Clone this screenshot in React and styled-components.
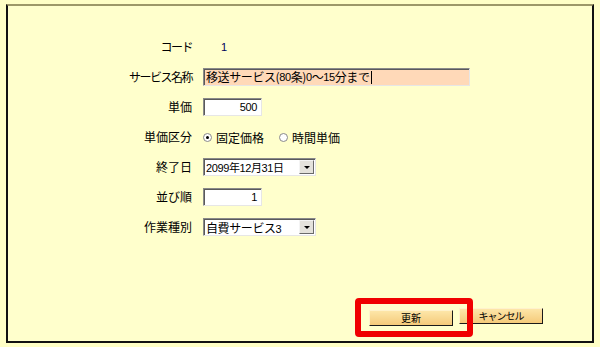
import React from "react";
import styled, { createGlobalStyle } from "styled-components";

const Global = createGlobalStyle`
  html, body { margin: 0; padding: 0; background: #ffffc6; }
  body { font-family: "Noto Sans CJK JP", "Noto Sans", sans-serif; font-size: 12px; color: #000; }
`;

const Page = styled.div`
  width: 600px;
  height: 347px;
  padding: 4px 6px 0 6px;
  box-sizing: border-box;
  background: #ffffc6;
`;

const Frame = styled.div`
  width: 588px;
  height: 339px;
  box-sizing: border-box;
  border: 2px solid #111;
  border-top-color: #9d9868;
  background: #ffffcc;
  padding-top: 26px;
  display: flex;
  flex-direction: column;
`;

const Form = styled.div`
  display: grid;
  grid-template-columns: 184px 1fr;
  column-gap: 11px;
  grid-auto-rows: 30px;
  align-items: center;
`;

const Label = styled.div`
  text-align: right;
  font-size: 12px;
  line-height: 14px;
  letter-spacing: ${(p) => (p.$tight ? "-1.5px" : "0")};
`;

const Field = styled.div`
  display: flex;
  align-items: center;
`;

const CodeValue = styled.span`
  padding-left: 18px;
  color: #00005a;
  font-family: "Liberation Sans", sans-serif;
  font-size: 11px;
`;

const TextBox = styled.div`
  box-sizing: border-box;
  width: ${(p) => p.$w}px;
  height: 18px;
  background: ${(p) => p.$bg || "#fff"};
  border: 1px solid;
  border-color: #8a8a8a #e6e6e6 #e6e6e6 #8a8a8a;
  box-shadow: inset 1px 1px 0 #5a5a5a;
  display: flex;
  align-items: center;
  justify-content: ${(p) => (p.$right ? "flex-end" : "flex-start")};
  padding: 0 4px 0 2px;
  font-size: 12px;
  line-height: 14px;
  letter-spacing: -0.4px;
  white-space: nowrap;
  overflow: hidden;
`;

const Num = styled.span`
  font-family: "Liberation Sans", sans-serif;
  font-size: 11px;
`;

const Caret = styled.span`
  display: inline-block;
  width: 1px;
  height: 13px;
  background: #000;
  margin-left: 1px;
`;

const SelectBox = styled.div`
  box-sizing: border-box;
  width: 113px;
  height: 18px;
  background: #fff;
  border: 1px solid;
  border-color: #8a8a8a #e6e6e6 #e6e6e6 #8a8a8a;
  box-shadow: inset 1px 1px 0 #5a5a5a;
  display: flex;
  align-items: center;
  padding-left: 2px;
  font-size: 12px;
  letter-spacing: -0.4px;
  white-space: nowrap;
`;

const SelectText = styled.span`
  flex: 1;
  font-size: ${(p) => p.$size || 12}px;
`;

const ArrowBtn = styled.span`
  box-sizing: border-box;
  width: 15px;
  height: 14px;
  margin-right: 1px;
  background: #e4e2dc;
  border: 1px solid;
  border-color: #f4f4f4 #6a6a6a #6a6a6a #f4f4f4;
  display: flex;
  align-items: center;
  justify-content: center;
  &::after {
    content: "";
    border-left: 3px solid transparent;
    border-right: 3px solid transparent;
    border-top: 3px solid #000;
  }
`;

const RadioGroup = styled.div`
  display: flex;
  align-items: center;
`;

const RadioItem = styled.label`
  display: flex;
  align-items: center;
  margin-right: ${(p) => p.$mr || 0}px;
  font-size: 12px;
`;

const RadioDot = styled.span`
  box-sizing: border-box;
  width: 9px;
  height: 9px;
  border-radius: 50%;
  border: 1px solid #8a8a8a;
  background: #fff;
  margin: 0 4px 0 0;
  display: flex;
  align-items: center;
  justify-content: center;
  &::after {
    content: "";
    width: 3px;
    height: 3px;
    border-radius: 50%;
    background: ${(p) => (p.$checked ? "#000" : "transparent")};
  }
`;

const Footer = styled.div`
  margin-top: 66px;
  display: flex;
  justify-content: flex-end;
  gap: 6px;
  padding-right: 49px;
`;

const ButtonWrap = styled.div`
  position: relative;
`;

const Highlight = styled.div`
  position: absolute;
  left: -14px;
  top: -10px;
  width: 118px;
  height: 39px;
  box-sizing: border-box;
  border: 6px solid #f00000;
  border-radius: 4px;
  pointer-events: none;
`;

const Button = styled.button`
  box-sizing: border-box;
  width: 84px;
  height: 16px;
  padding: 0;
  background: linear-gradient(#fde6a8, #f5ca7a);
  border: 1px solid;
  border-color: #fff2cc #1a1a1a #1a1a1a #fff2cc;
  font-family: "Noto Sans CJK JP", sans-serif;
  font-size: 10px;
  line-height: 12px;
  color: #000;
  letter-spacing: ${(p) => (p.$tight ? "-1px" : "0")};
`;

export default function App() {
  return (
    <Page>
      <Global />
      <Frame>
        <Form>
          <Label $tight>コード</Label>
          <Field><CodeValue>1</CodeValue></Field>

          <Label $tight>サービス名称</Label>
          <Field>
            <TextBox $w={267} $bg="#ffd9b8">
              移送サービス(<Num>80</Num>条)<Num>0</Num>～<Num>15</Num>分まで<Caret />
            </TextBox>
          </Field>

          <Label>単価</Label>
          <Field>
            <TextBox $w={59} $right><Num>500</Num></TextBox>
          </Field>

          <Label>単価区分</Label>
          <Field>
            <RadioGroup>
              <RadioItem $mr={15}><RadioDot $checked />固定価格</RadioItem>
              <RadioItem><RadioDot />時間単価</RadioItem>
            </RadioGroup>
          </Field>

          <Label>終了日</Label>
          <Field>
            <SelectBox>
              <SelectText $size={11}><Num>2099</Num>年<Num>12</Num>月<Num>31</Num>日</SelectText>
              <ArrowBtn />
            </SelectBox>
          </Field>

          <Label>並び順</Label>
          <Field>
            <TextBox $w={59} $right><Num>1</Num></TextBox>
          </Field>

          <Label>作業種別</Label>
          <Field>
            <SelectBox>
              <SelectText>自費サービス<Num>3</Num></SelectText>
              <ArrowBtn />
            </SelectBox>
          </Field>
        </Form>

        <Footer>
          <ButtonWrap>
            <Button>更新</Button>
            <Highlight />
          </ButtonWrap>
          <Button $tight>キャンセル</Button>
        </Footer>
      </Frame>
    </Page>
  );
}
